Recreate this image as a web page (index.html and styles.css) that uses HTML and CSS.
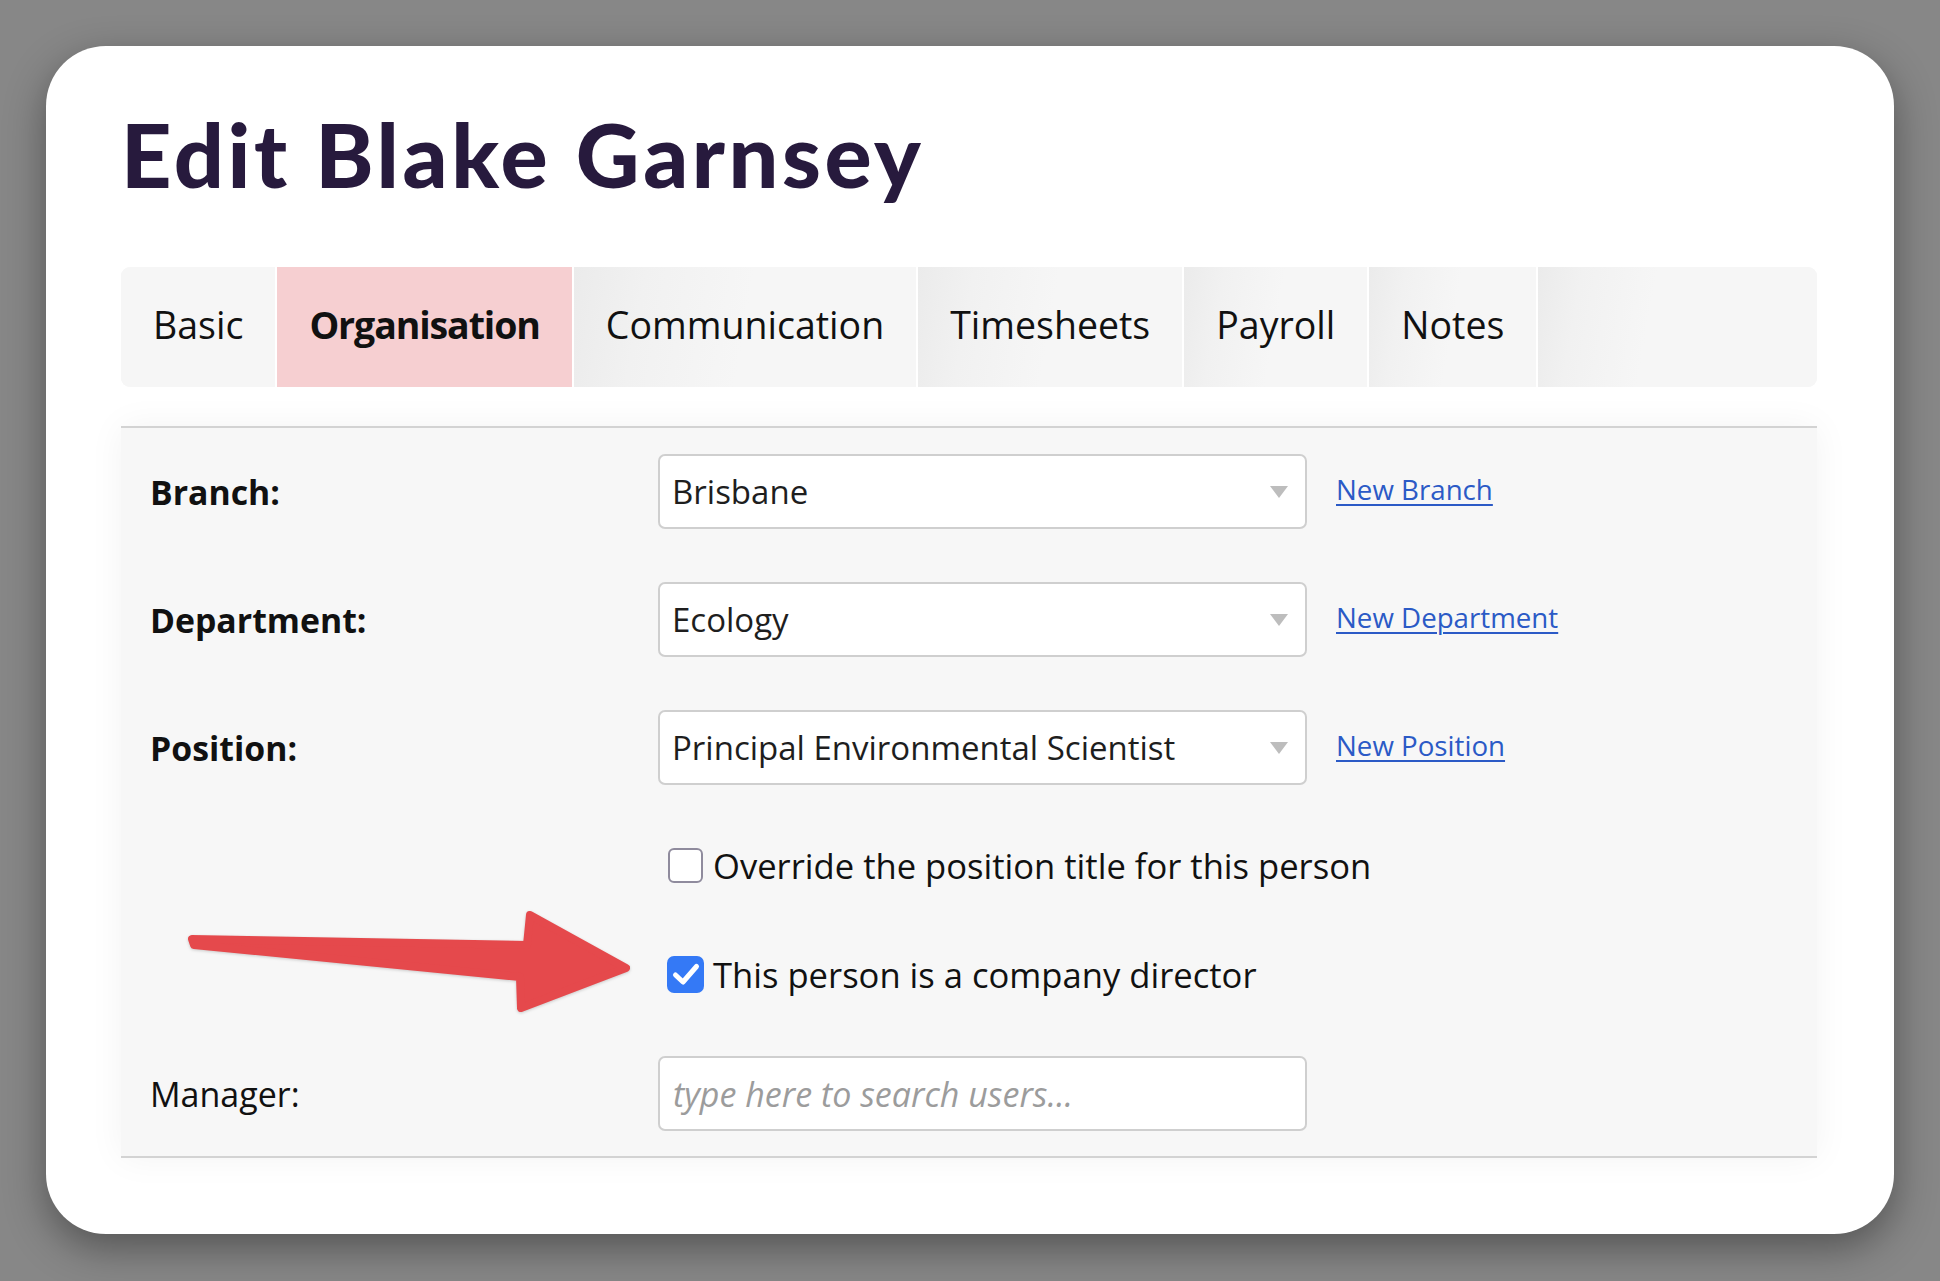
FILE: index.html
```html
<!DOCTYPE html>
<html lang="en">
<head>
<meta charset="utf-8">
<title>Edit Blake Garnsey</title>
<link rel="stylesheet" href="styles.css">
</head>
<body>
<div class="card">
  <h1 class="title">Edit Blake Garnsey</h1>

  <nav class="tabs">
    <a class="tab">Basic</a>
    <a class="tab tab-active">Organisation</a>
    <a class="tab">Communication</a>
    <a class="tab">Timesheets</a>
    <a class="tab">Payroll</a>
    <a class="tab">Notes</a>
    <span class="tab-fill"></span>
  </nav>

  <div class="panel">
    <div class="row">
      <label class="label">Branch:</label>
      <div class="select"><span>Brisbane</span><span class="caret"></span></div>
      <a class="link">New Branch</a>
    </div>
    <div class="row row-gap">
      <label class="label">Department:</label>
      <div class="select"><span>Ecology</span><span class="caret"></span></div>
      <a class="link">New Department</a>
    </div>
    <div class="row row-gap">
      <label class="label">Position:</label>
      <div class="select"><span>Principal Environmental Scientist</span><span class="caret"></span></div>
      <a class="link">New Position</a>
    </div>

    <div class="check-row check-first">
      <span class="box"></span>
      <span class="check-text">Override the position title for this person</span>
    </div>
    <div class="check-row check-second">
      <span class="box box-checked">
        <svg viewBox="0 0 37 37" width="37" height="37"><path d="M8.5 19 L16 26 L29.5 10.5" fill="none" stroke="#fff" stroke-width="5" stroke-linecap="round" stroke-linejoin="round"/></svg>
      </span>
      <span class="check-text">This person is a company director</span>
    </div>

    <div class="row row-manager">
      <label class="label label-regular">Manager:</label>
      <div class="input"><span class="placeholder">type here to search users...</span></div>
    </div>
  </div>

  <svg class="callout-arrow" viewBox="0 0 480 135" width="480" height="135">
    <polygon points="22,44 357,50 360,20 456,73 351,113 350,82 24,50" fill="#e5494c" stroke="#e5494c" stroke-width="8" stroke-linejoin="round"/>
  </svg>
</div>
</body>
</html>
```
FILE: styles.css
```css
html, body {
  margin: 0;
  padding: 0;
}

body {
  background: #878787;
  width: 1940px;
  height: 1281px;
  overflow: hidden;
  font-family: "Open Sans", "Noto Sans", sans-serif;
  color: #111;
}

.card {
  position: relative;
  box-sizing: border-box;
  margin: 46px 0 0 46px;
  width: 1848px;
  height: 1188px;
  padding: 55px 77px 0 75px;
  background: #fff;
  border-radius: 60px;
  box-shadow: 0 14px 40px rgba(0, 0, 0, 0.38);
}

.title {
  margin: 0;
  font-family: "Lato", sans-serif;
  font-weight: 900;
  font-size: 88px;
  line-height: 106px;
  letter-spacing: 3.6px;
  color: #271a3d;
}

/* Tabs */
.tabs {
  display: flex;
  margin-top: 60px;
  height: 120px;
  border-radius: 9px;
  overflow: hidden;
  background: #f6f6f6;
}

.tab {
  display: flex;
  align-items: center;
  box-sizing: border-box;
  padding: 0 32px 5px 32px;
  border-right: 2px solid #fff;
  font-size: 37.5px;
  color: #111;
  background: linear-gradient(100deg, #ebebeb 0%, #f1f1f1 20%, #f6f6f6 50%);
  white-space: nowrap;
}

.tab:first-child {
  background: #f6f6f6;
}

.tab-active {
  background: #f6cfd1;
  font-weight: 700;
  letter-spacing: -1.1px;
}

.tab-fill {
  flex: 1;
  background: linear-gradient(100deg, #ebebeb 0%, #f1f1f1 15%, #f6f6f6 40%);
}

/* Panel */
.panel {
  margin-top: 39px;
  padding: 26px 0 25px 29px;
  background: #f7f7f7;
  border-top: 2px solid #d3d3d3;
  border-bottom: 2px solid #d3d3d3;
  box-shadow: 0 0 34px rgba(0, 0, 0, 0.05);
}

.row {
  display: grid;
  grid-template-columns: 479px 649px auto;
  column-gap: 29px;
  align-items: center;
  height: 75px;
}

.row-gap {
  margin-top: 53px;
}

.label {
  font-weight: 700;
  font-size: 33.8px;
  color: #111;
}

.label-regular {
  font-weight: 400;
  font-size: 34px;
}

.select,
.input {
  box-sizing: border-box;
  display: flex;
  align-items: center;
  height: 75px;
  background: #fff;
  border: 2px solid #cfcfcf;
  border-radius: 7px;
  padding: 0 17px 0 12px;
  font-size: 33px;
  color: #1e1e1e;
}

.select span:first-child {
  flex: 1;
}

.caret {
  width: 0;
  height: 0;
  border-left: 9.5px solid transparent;
  border-right: 9.5px solid transparent;
  border-top: 12px solid #bdbdbd;
}

.input {
  padding-left: 13px;
}

.placeholder {
  font-style: italic;
  font-size: 34px;
  color: #9c9c9c;
}

.link {
  font-size: 27.7px;
  color: #2b5ac6;
  text-decoration: underline;
  text-decoration-thickness: 2px;
  text-underline-offset: 4px;
  margin-top: -6px;
}

/* Checkbox rows */
.check-row {
  display: flex;
  align-items: center;
  height: 44px;
  margin-left: 518px;
  gap: 10px;
  font-size: 34.6px;
  color: #111;
}

.check-first {
  margin-top: 58.5px;
}

.check-second {
  margin-top: 65px;
  gap: 9px;
}

.box {
  box-sizing: border-box;
  width: 35px;
  height: 35px;
  flex: none;
  background: #fff;
  border: 2px solid #8f8b9d;
  border-radius: 6px;
}

.box-checked {
  width: 37px;
  height: 37px;
  margin-left: -1px;
  border: none;
  border-radius: 7px;
  background: #3479f6;
}

.box-checked svg {
  display: block;
}

.row-manager {
  margin-top: 59.5px;
}

/* Annotation arrow lying over the form */
.callout-arrow {
  position: absolute;
  left: 124px;
  top: 849px;
  filter: drop-shadow(0 1px 1.5px rgba(0, 0, 0, 0.18));
}
```
